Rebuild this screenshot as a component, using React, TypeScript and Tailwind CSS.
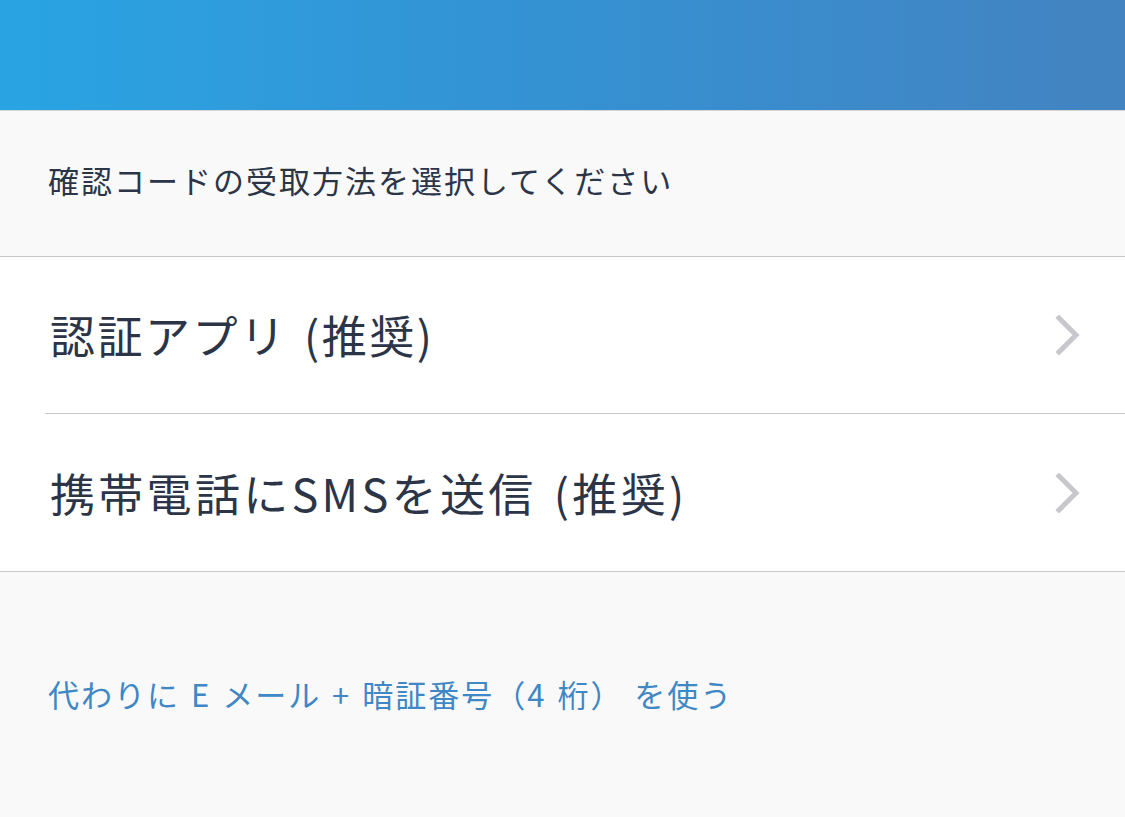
import React from "react";

const Chevron = () => (
  <svg width="26" height="40" viewBox="0 0 26 40" fill="none">
    <path d="M4 3 L21 20 L4 37" stroke="#c7c7cc" strokeWidth="5" strokeLinecap="square" strokeLinejoin="miter" />
  </svg>
);

export default function App() {
  return (
    <div
      className="w-[1125px] h-[817px] bg-[#f9f9f9] flex flex-col overflow-hidden"
      style={{ fontFamily: '"Noto Sans CJK JP", "Noto Sans", sans-serif' }}
    >
      <div className="h-[111px] shrink-0 bg-gradient-to-r from-[#29a4e3] via-[#3491d2] to-[#4383c1] border-b border-[#d6d6d6]" />
      <div className="h-[145px] shrink-0 flex items-center pl-[48px] pb-[6px] text-[31px] font-normal text-[#2c3548] tracking-[2px]">
        確認コードの受取方法を選択してください
      </div>
      <div className="bg-white border-t border-b border-[#c8c8cc]">
        <div className="h-[156px] flex items-center justify-between pl-[50px] pr-[44px]">
          <span className="text-[45px] font-normal text-[#2c3548] tracking-[2.5px] [word-spacing:4px]">認証アプリ (推奨)</span>
          <Chevron />
        </div>
        <div className="ml-[45px] h-px bg-[#c8c8cc]" />
        <div className="h-[157px] flex items-center justify-between pl-[50px] pr-[44px]">
          <span className="text-[45px] font-normal text-[#2c3548] tracking-[3.3px] [word-spacing:4px]">携帯電話にSMSを送信 (推奨)</span>
          <Chevron />
        </div>
      </div>
      <div className="pt-[99px] pl-[48px] text-[31px] font-normal text-[#3f87c5] tracking-[2px] [word-spacing:2px]">
        代わりに E メール + 暗証番号（4 桁） を使う
      </div>
    </div>
  );
}
